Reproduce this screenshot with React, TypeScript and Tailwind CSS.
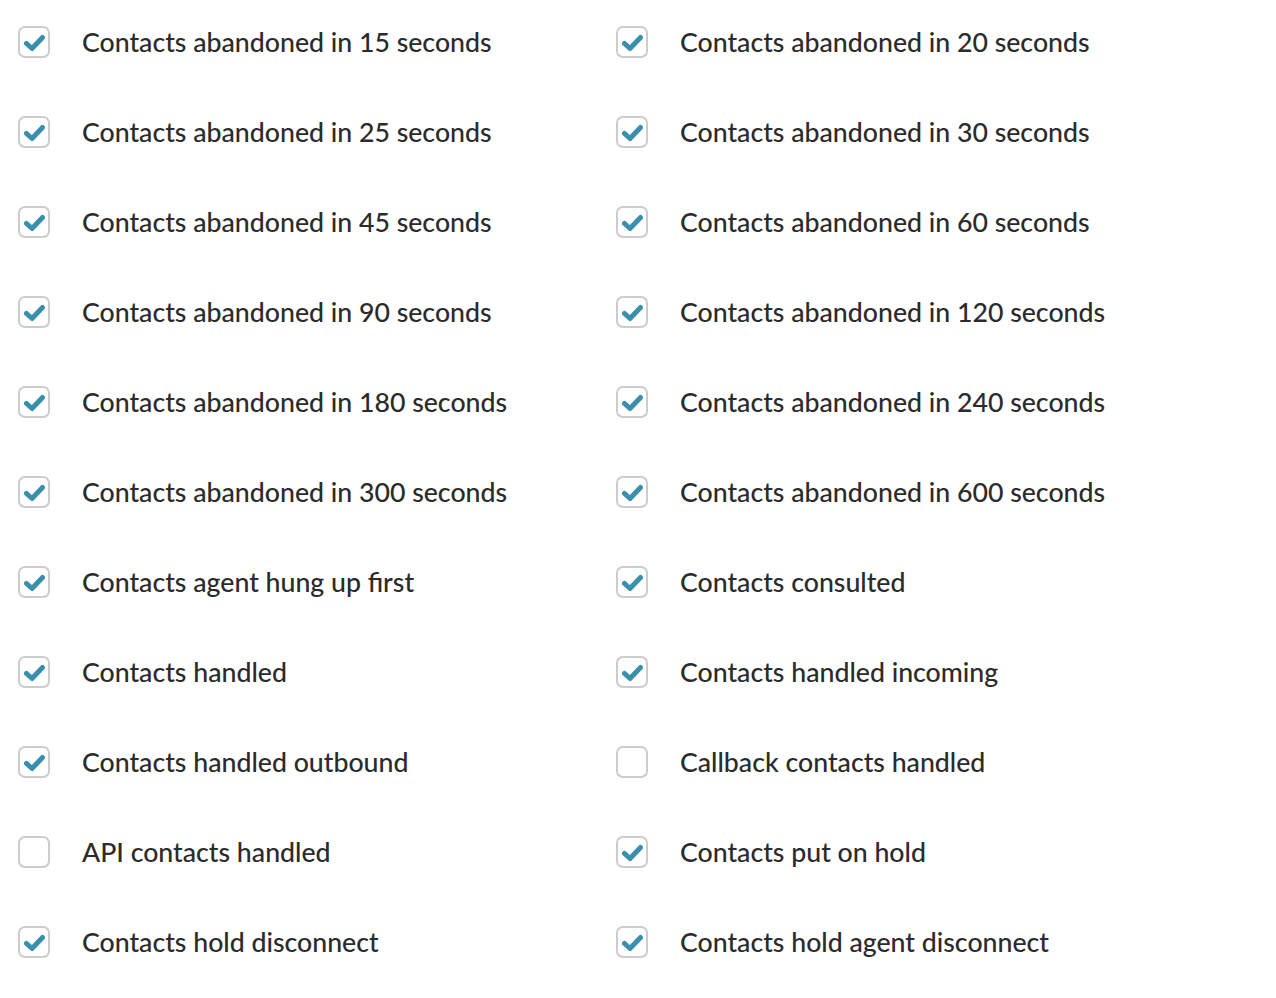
import React from "react";

const items: { label: string; checked: boolean }[] = [
  { label: "Contacts abandoned in 15 seconds", checked: true },
  { label: "Contacts abandoned in 20 seconds", checked: true },
  { label: "Contacts abandoned in 25 seconds", checked: true },
  { label: "Contacts abandoned in 30 seconds", checked: true },
  { label: "Contacts abandoned in 45 seconds", checked: true },
  { label: "Contacts abandoned in 60 seconds", checked: true },
  { label: "Contacts abandoned in 90 seconds", checked: true },
  { label: "Contacts abandoned in 120 seconds", checked: true },
  { label: "Contacts abandoned in 180 seconds", checked: true },
  { label: "Contacts abandoned in 240 seconds", checked: true },
  { label: "Contacts abandoned in 300 seconds", checked: true },
  { label: "Contacts abandoned in 600 seconds", checked: true },
  { label: "Contacts agent hung up first", checked: true },
  { label: "Contacts consulted", checked: true },
  { label: "Contacts handled", checked: true },
  { label: "Contacts handled incoming", checked: true },
  { label: "Contacts handled outbound", checked: true },
  { label: "Callback contacts handled", checked: false },
  { label: "API contacts handled", checked: false },
  { label: "Contacts put on hold", checked: true },
  { label: "Contacts hold disconnect", checked: true },
  { label: "Contacts hold agent disconnect", checked: true },
];

const Checkbox = ({ checked }: { checked: boolean }) => (
  <div className="w-[32px] h-[32px] rounded-[7px] border-2 border-[#cccccc] bg-white flex items-center justify-center shrink-0">
    {checked && (
      <svg width="24" height="24" viewBox="0 0 24 24">
        <path
          d="M4.5 13.5 L10 18.5 L20.5 7.5"
          fill="none"
          stroke="#3a8fac"
          strokeWidth="5"
          strokeLinecap="round"
          strokeLinejoin="round"
        />
      </svg>
    )}
  </div>
);

export default function App() {
  return (
    <div className="w-[1276px] h-[998px] bg-white overflow-hidden" style={{ fontFamily: "Lato, 'Open Sans', sans-serif" }}>
      <div className="grid grid-cols-[598px_1fr] pl-[18px]">
        {items.map((item) => (
          <div key={item.label} className="h-[90px] pt-[26px]">
            <label className="flex items-center h-[32px] gap-[32px] cursor-pointer">
              <Checkbox checked={item.checked} />
              <span className="text-[26.7px] leading-none text-[#2b2b2b] font-medium whitespace-nowrap">{item.label}</span>
            </label>
          </div>
        ))}
      </div>
    </div>
  );
}
